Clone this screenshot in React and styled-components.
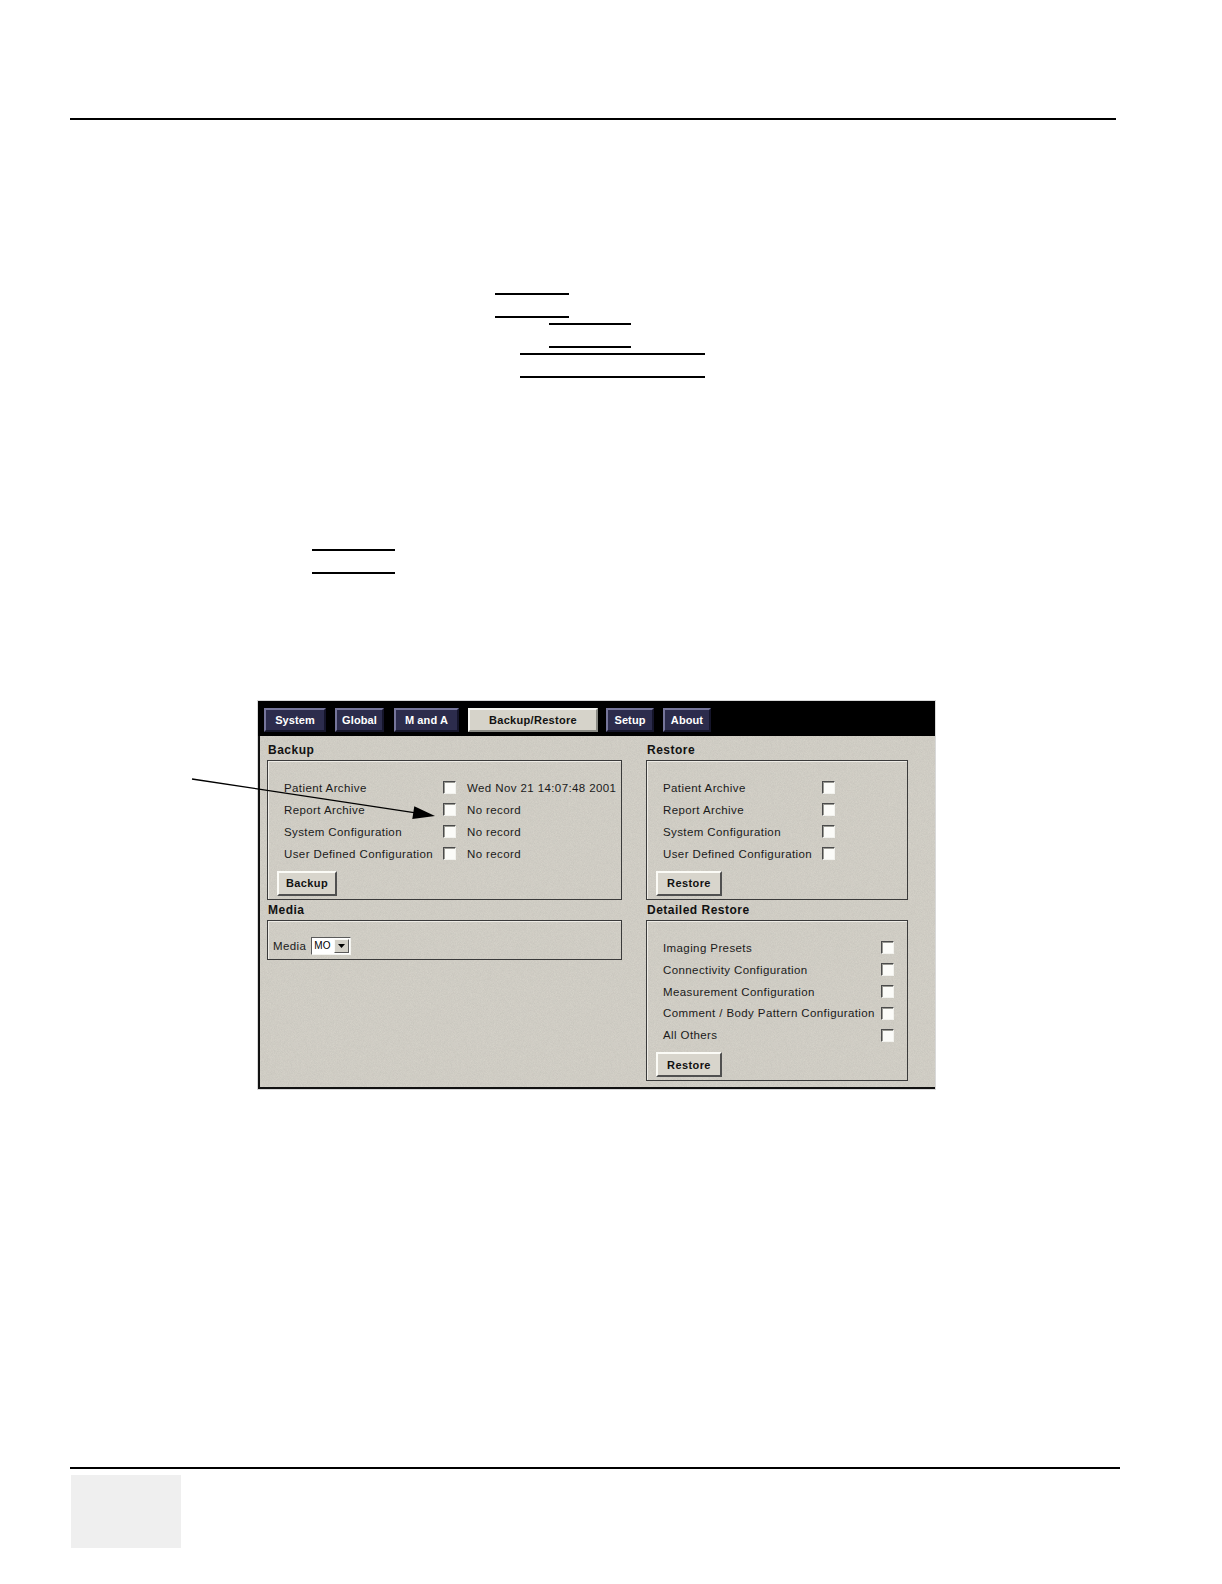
import React from 'react';
import styled, { createGlobalStyle } from 'styled-components';

const GlobalStyle = createGlobalStyle`
  html, body {
    margin: 0;
    padding: 0;
    background: #ffffff;
  }
`;

// speckled grey of the old system screen
const noise = `url("data:image/svg+xml,%3Csvg xmlns='http://www.w3.org/2000/svg' width='160' height='160'%3E%3Cfilter id='n'%3E%3CfeTurbulence type='fractalNoise' baseFrequency='1.3' numOctaves='2' stitchTiles='stitch'/%3E%3CfeColorMatrix values='0 0 0 0 0.42 0 0 0 0 0.41 0 0 0 0 0.38 0 0 0 0.45 -0.05'/%3E%3C/filter%3E%3Crect width='160' height='160' filter='url(%23n)'/%3E%3C/svg%3E")`;

const Page = styled.div`
  position: relative;
  width: 1222px;
  height: 1584px;
  overflow: hidden;
  background: #ffffff;
  font-family: "Liberation Sans", Arial, sans-serif;
`;

const Rule = styled.div`
  margin-left: ${p => p.$left}px;
  margin-top: ${p => p.$top}px;
  width: ${p => p.$width}px;
  height: 2px;
  background: #000;
`;

/* blank underlines of the form fields */
const BlankLine = styled.div`
  margin-left: ${p => p.$left}px;
  margin-top: ${p => p.$gap}px;
  width: ${p => p.$width}px;
  height: 2px;
  background: #000;
`;

const Figure = styled.div`
  margin-left: 257px;
  margin-top: 126px;
  width: 679px;
  height: 390px;
  box-sizing: border-box;
  border: 1px solid #d9d9d9;
  display: flex;
  flex-direction: column;
  background: #000;
`;

const TabBar = styled.div`
  display: flex;
  gap: 9px;
  padding: 7px 6px 4px 6px;
  background: #000;
`;

const Tab = styled.div`
  box-sizing: border-box;
  height: 24px;
  width: ${p => p.$w}px;
  margin-left: ${p => p.$shift || 0}px;
  display: flex;
  align-items: center;
  justify-content: center;
  font-size: 11px;
  font-weight: bold;
  color: ${p => (p.$active ? '#111' : '#ffffff')};
  background: ${p => (p.$active ? '#d6d3ca' : '#2c2c4c')};
  border: 2px solid;
  border-color: ${p =>
    p.$active ? '#f4f4f0 #8a8a84 #8a8a84 #f4f4f0' : '#75759a #15152a #15152a #75759a'};
  letter-spacing: ${p => (p.$active ? '0.3px' : '0.1px')};
`;

const Body = styled.div`
  flex: 1;
  display: grid;
  grid-template-columns: 355px 262px;
  grid-template-rows: auto 1fr;
  column-gap: 24px;
  padding: 8px 7px 6px 7px;
  background-color: #d6d3ca;
  background-image: ${noise};
  border-left: 2px solid #111;
  border-bottom: 2px solid #111;
  align-items: start;
`;

const Section = styled.div`
  display: flex;
  flex-direction: column;
  margin-top: ${p => p.$top || 0}px;
`;

const GroupTitle = styled.div`
  font-size: 12px;
  font-weight: bold;
  color: #111;
  letter-spacing: 0.5px;
  padding-left: 1px;
  height: 16px;
  line-height: 12px;
`;

const GroupBox = styled.div`
  box-sizing: border-box;
  height: ${p => p.$h}px;
  border: 1px solid #3a3a3a;
  box-shadow: inset 1px 1px 0 #eeece6;
  padding: ${p => p.$pad || '16px 9px 3px 9px'};
  display: flex;
  flex-direction: column;
  align-items: flex-start;
`;

const Row = styled.div`
  display: flex;
  align-items: center;
  height: 21.9px;
  padding-left: 7px;
  font-size: 11.5px;
  letter-spacing: 0.4px;
  color: #1a1a1a;
`;

const Label = styled.span`
  width: ${p => p.$w}px;
  white-space: nowrap;
`;

const Check = styled.span`
  box-sizing: border-box;
  width: 13px;
  height: 13px;
  background: #fbfbf8;
  border: 1px solid;
  border-color: #4a4a4a #f2f2ee #f2f2ee #4a4a4a;
  box-shadow: inset 1px 1px 0 #9a9a94;
  flex-shrink: 0;
`;

const Status = styled.span`
  margin-left: 11px;
  white-space: nowrap;
`;

const Button = styled.div`
  box-sizing: border-box;
  margin-top: 6px;
  width: ${p => p.$w}px;
  height: 25px;
  display: flex;
  align-items: center;
  justify-content: center;
  font-size: 11px;
  font-weight: bold;
  letter-spacing: 0.4px;
  color: #111;
  border: 2px solid;
  border-color: #fbfbf6 #505050 #505050 #fbfbf6;
  background: #d8d5cc;
`;

const MediaRow = styled.div`
  display: flex;
  align-items: center;
  gap: 5px;
  font-size: 11.5px;
  letter-spacing: 0.4px;
  color: #1a1a1a;
`;

const Select = styled.div`
  box-sizing: border-box;
  display: flex;
  width: 40px;
  height: 18px;
  border: 1px solid;
  border-color: #5a5a5a #f4f4f0 #f4f4f0 #5a5a5a;
  background: #fff;
`;

const SelectValue = styled.span`
  flex: 1;
  font-size: 10px;
  letter-spacing: 0;
  line-height: 16px;
  padding-left: 2px;
  color: #000;
`;

const SelectButton = styled.span`
  box-sizing: border-box;
  width: 15px;
  margin: 1px;
  display: flex;
  align-items: center;
  justify-content: center;
  background: #d4d1c8;
  border: 1px solid;
  border-color: #fafaf6 #5a5a5a #5a5a5a #fafaf6;
`;

const Callout = styled.svg`
  position: absolute;
  left: 0;
  top: 0;
  pointer-events: none;
`;

const GrayBlock = styled.div`
  margin-left: 71px;
  margin-top: 6px;
  width: 110px;
  height: 73px;
  background: #efefef;
`;

const tabs = [
  { name: 'System', w: 62 },
  { name: 'Global', w: 49 },
  { name: 'M and A', w: 65, shift: 1 },
  { name: 'Backup/Restore', w: 130 },
  { name: 'Setup', w: 48, shift: -1 },
  { name: 'About', w: 48 },
];

const archives = [
  'Patient Archive',
  'Report Archive',
  'System Configuration',
  'User Defined Configuration',
];

const backupStatus = ['Wed Nov 21 14:07:48 2001', 'No record', 'No record', 'No record'];

const detailed = [
  'Imaging Presets',
  'Connectivity Configuration',
  'Measurement Configuration',
  'Comment / Body Pattern Configuration',
  'All Others',
];

const blanks = [
  { left: 495, width: 74, gap: 173 },
  { left: 495, width: 74, gap: 21 },
  { left: 549, width: 82, gap: 5 },
  { left: 549, width: 82, gap: 21 },
  { left: 520, width: 185, gap: 5 },
  { left: 520, width: 185, gap: 21 },
  { left: 312, width: 83, gap: 171 },
  { left: 312, width: 83, gap: 21 },
];

export default function App() {
  return (
    <>
      <GlobalStyle />
      <Page>
        <Rule $left={70} $top={118} $width={1046} />

        {blanks.map((b, i) => (
          <BlankLine key={i} $left={b.left} $width={b.width} $gap={b.gap} />
        ))}

        <Figure>
          <TabBar>
            {tabs.map(t => (
              <Tab key={t.name} $w={t.w} $shift={t.shift} $active={t.active || t.name === 'Backup/Restore'}>
                {t.name}
              </Tab>
            ))}
          </TabBar>
          <Body>
            <Section>
              <GroupTitle>Backup</GroupTitle>
              <GroupBox $h={140}>
                {archives.map((a, i) => (
                  <Row key={a}>
                    <Label $w={159}>{a}</Label>
                    <Check />
                    <Status>{backupStatus[i]}</Status>
                  </Row>
                ))}
                <Button $w={60}>Backup</Button>
              </GroupBox>
            </Section>

            <Section>
              <GroupTitle>Restore</GroupTitle>
              <GroupBox $h={140}>
                {archives.map(a => (
                  <Row key={a}>
                    <Label $w={159}>{a}</Label>
                    <Check />
                  </Row>
                ))}
                <Button $w={66}>Restore</Button>
              </GroupBox>
            </Section>

            <Section $top={4}>
              <GroupTitle>Media</GroupTitle>
              <GroupBox $h={40} $pad="16px 6px 4px 5px">
                <MediaRow>
                  Media
                  <Select>
                    <SelectValue>MO</SelectValue>
                    <SelectButton>
                      <svg width="7" height="4" viewBox="0 0 7 4">
                        <path d="M0 0 H7 L3.5 4 Z" fill="#000" />
                      </svg>
                    </SelectButton>
                  </Select>
                </MediaRow>
              </GroupBox>
            </Section>

            <Section $top={4}>
              <GroupTitle>Detailed Restore</GroupTitle>
              <GroupBox $h={161}>
                {detailed.map(d => (
                  <Row key={d}>
                    <Label $w={218}>{d}</Label>
                    <Check />
                  </Row>
                ))}
                <Button $w={66}>Restore</Button>
              </GroupBox>
            </Section>
          </Body>
        </Figure>

        <Rule $left={70} $top={377} $width={1050} />
        <GrayBlock />

        <Callout width="1222" height="1584" viewBox="0 0 1222 1584">
          <line x1="192" y1="779" x2="414" y2="812.7" stroke="#000" strokeWidth="1.3" />
          <path d="M435 816 L414.3 806.3 L412.3 819.1 Z" fill="#000" />
        </Callout>
      </Page>
    </>
  );
}
